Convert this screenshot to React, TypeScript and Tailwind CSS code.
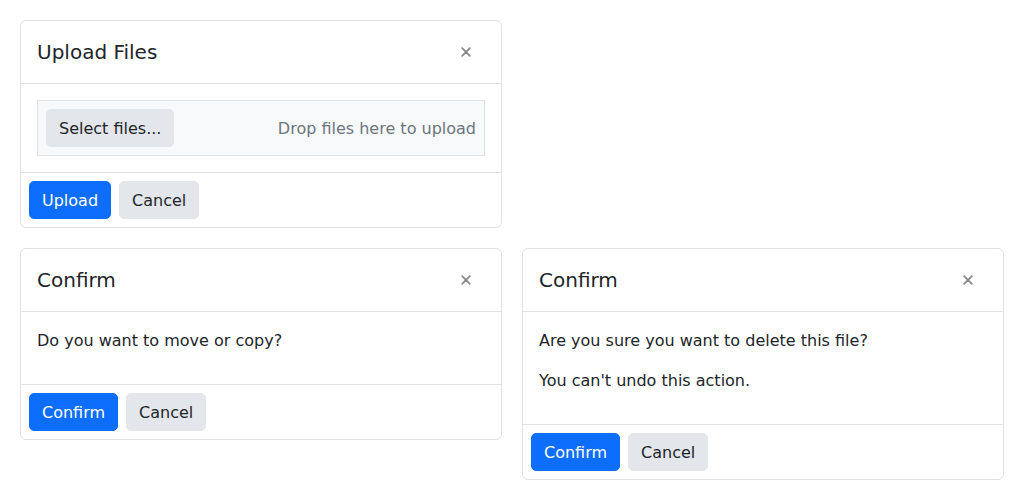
const font = { fontFamily: '"DejaVu Sans", sans-serif' }

function CloseIcon() {
  return (
    <button type="button" className="flex h-6 w-6 items-center justify-center opacity-50">
      <svg width="10" height="10" viewBox="0 0 10 10">
        <path d="M1.2 1.2L8.8 8.8M8.8 1.2L1.2 8.8" stroke="#111" strokeWidth="1.7" strokeLinecap="round" />
      </svg>
    </button>
  )
}

function Btn({ primary, children }: { primary?: boolean; children: React.ReactNode }) {
  return (
    <button
      type="button"
      className={
        primary
          ? 'h-[38px] rounded-[5px] border border-[#0d6efd] bg-[#0d6efd] px-3 pt-px text-base text-white'
          : 'h-[38px] rounded-[5px] border border-[#e3e6ea] bg-[#e3e6ea] px-3 pt-px text-base text-[#212529]'
      }
    >
      {children}
    </button>
  )
}

function Card({
  title,
  children,
  actions,
}: {
  title: string
  children: React.ReactNode
  actions: [string, string]
}) {
  return (
    <div className="w-[482px] rounded-[6px] border border-[#dee2e6] bg-white">
      <div className="flex h-[63px] items-center justify-between border-b border-[#dee2e6] pl-4 pr-[23px]">
        <h5 className="text-xl text-[#212529]">{title}</h5>
        <CloseIcon />
      </div>
      <div className="border-b border-[#dee2e6] p-4">{children}</div>
      <div className="flex gap-2 p-2">
        <Btn primary>{actions[0]}</Btn>
        <Btn>{actions[1]}</Btn>
      </div>
    </div>
  )
}

export default function App() {
  return (
    <div className="min-h-[500px] bg-white p-5 text-base text-[#212529]" style={font}>
      <div className="flex flex-col gap-5">
        <Card title="Upload Files" actions={['Upload', 'Cancel']}>
          <div className="flex h-[56px] items-center justify-between border border-[#dee2e6] bg-[#f8f9fa] pl-2 pr-2">
            <Btn>Select files...</Btn>
            <span className="pt-px text-[#6c757d]">Drop files here to upload</span>
          </div>
        </Card>
        <div className="flex items-start gap-5">
          <Card title="Confirm" actions={['Confirm', 'Cancel']}>
            <p className="mb-[15px] pt-px leading-6">Do you want to move or copy?</p>
          </Card>
          <Card title="Confirm" actions={['Confirm', 'Cancel']}>
            <p className="mb-[15px] pt-px leading-6">Are you sure you want to delete this file?</p>
            <p className="mb-[15px] pt-px leading-6">You can't undo this action.</p>
          </Card>
        </div>
      </div>
    </div>
  )
}
